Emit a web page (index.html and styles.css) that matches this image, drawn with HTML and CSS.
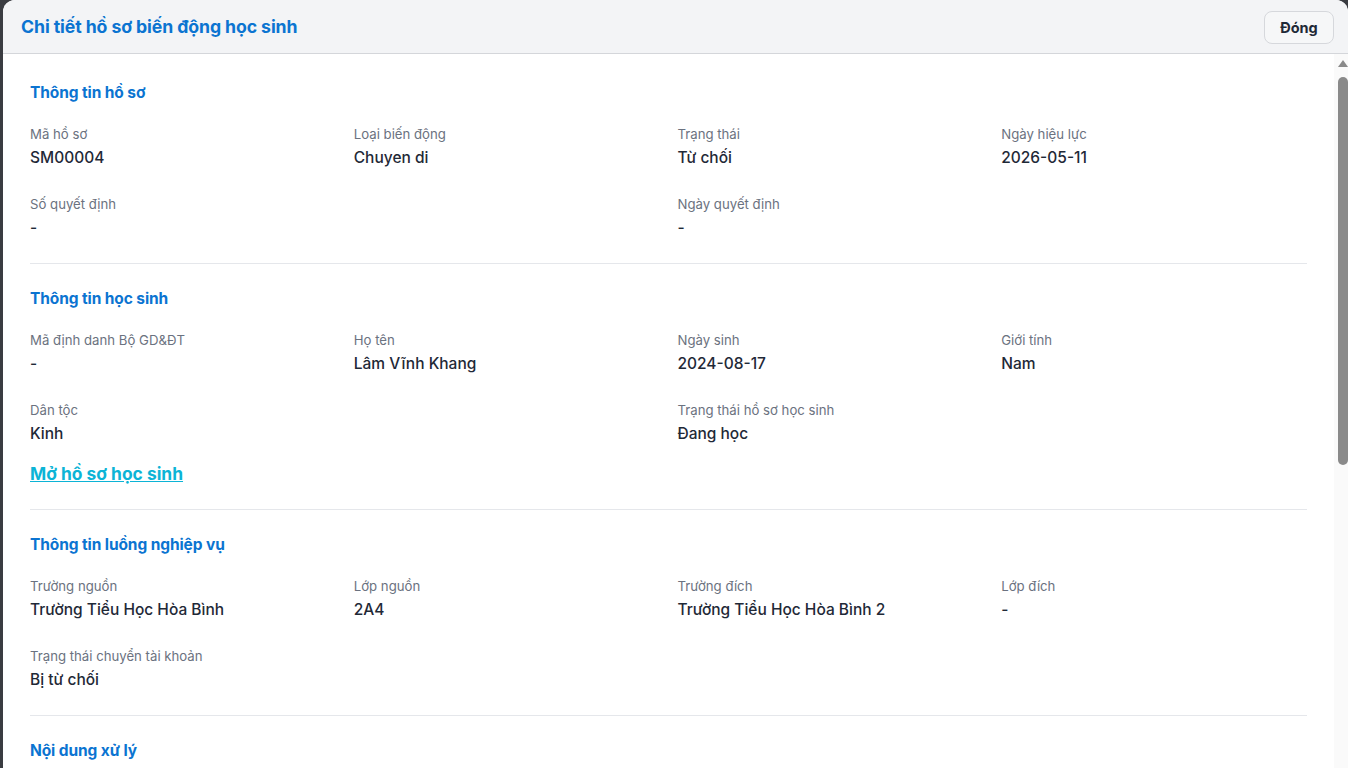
FILE: index.html
```html
<!DOCTYPE html>
<html lang="vi">
  <head>
    <meta charset="UTF-8" />
    <meta name="viewport" content="width=device-width, initial-scale=1.0" />
    <title>Chi tiết hồ sơ biến động học sinh</title>
    <link rel="stylesheet" href="styles.css">
  </head>
  <body>
    <div class="modal">
      <div class="modal-header">
        <h1>Chi tiết hồ sơ biến động học sinh</h1>
        <button class="btn-close">Đóng</button>
      </div>
      <div class="modal-main">
        <div class="modal-body">
          <div class="section">
            <h2>Thông tin hồ sơ</h2>
            <div class="grid">
              <div class="field"><span class="label">Mã hồ sơ</span><span class="value">SM00004</span></div>
              <div class="field"><span class="label">Loại biến động</span><span class="value">Chuyen di</span></div>
              <div class="field"><span class="label">Trạng thái</span><span class="value">Từ chối</span></div>
              <div class="field"><span class="label">Ngày hiệu lực</span><span class="value">2026-05-11</span></div>
              <div class="field"><span class="label">Số quyết định</span><span class="value">-</span></div>
              <div class="field"></div>
              <div class="field"><span class="label">Ngày quyết định</span><span class="value">-</span></div>
            </div>
          </div>

          <div class="section">
            <h2>Thông tin học sinh</h2>
            <div class="grid">
              <div class="field"><span class="label">Mã định danh Bộ GD&amp;ĐT</span><span class="value">-</span></div>
              <div class="field"><span class="label">Họ tên</span><span class="value">Lâm Vĩnh Khang</span></div>
              <div class="field"><span class="label">Ngày sinh</span><span class="value">2024-08-17</span></div>
              <div class="field"><span class="label">Giới tính</span><span class="value">Nam</span></div>
              <div class="field"><span class="label">Dân tộc</span><span class="value">Kinh</span></div>
              <div class="field"></div>
              <div class="field"><span class="label">Trạng thái hồ sơ học sinh</span><span class="value">Đang học</span></div>
            </div>
            <a class="student-link" href="#">Mở hồ sơ học sinh</a>
          </div>

          <div class="section">
            <h2>Thông tin luồng nghiệp vụ</h2>
            <div class="grid">
              <div class="field"><span class="label">Trường nguồn</span><span class="value">Trường Tiểu Học Hòa Bình</span></div>
              <div class="field"><span class="label">Lớp nguồn</span><span class="value">2A4</span></div>
              <div class="field"><span class="label">Trường đích</span><span class="value">Trường Tiểu Học Hòa Bình 2</span></div>
              <div class="field"><span class="label">Lớp đích</span><span class="value">-</span></div>
              <div class="field"><span class="label">Trạng thái chuyển tài khoản</span><span class="value">Bị từ chối</span></div>
            </div>
          </div>

          <div class="section">
            <h2>Nội dung xử lý</h2>
          </div>
        </div>
        <div class="scrollbar">
          <span class="scroll-up"></span>
          <span class="scroll-thumb"></span>
        </div>
      </div>
    </div>
  </body>
</html>
```

FILE: styles.css
```css
* {
  box-sizing: border-box;
  margin: 0;
  padding: 0;
}

html,
body {
  height: 100%;
}

body {
  font-family: "Inter", "Noto Sans", sans-serif;
  background: #3a3c41;
  overflow: hidden;
  padding-left: 3px;
}

.modal {
  height: 100vh;
  background: #fff;
  border-radius: 12px 12px 0 0;
  display: flex;
  flex-direction: column;
  overflow: hidden;
}

.modal-header {
  height: 54px;
  flex-shrink: 0;
  background: #f3f4f6;
  border-bottom: 1px solid #d4d6da;
  display: flex;
  align-items: center;
  justify-content: space-between;
  padding: 0 14px 0 18px;
}

.modal-header h1 {
  font-size: 17.7px;
  font-weight: 700;
  color: #0b74d1;
  letter-spacing: -0.1px;
}

.btn-close {
  width: 70px;
  height: 33px;
  border: 1px solid #d6d8dc;
  border-radius: 8px;
  background: #f6f7f8;
  font-family: inherit;
  font-size: 14.5px;
  font-weight: 700;
  color: #1f2937;
  cursor: pointer;
  margin-top: 1px;
}

.modal-main {
  flex: 1;
  min-height: 0;
  display: flex;
}

.modal-body {
  flex: 1;
  overflow: hidden;
  padding: 4px 27px 40px;
}

.section {
  padding: 25px 0 25px;
  border-bottom: 1px solid #e5e7eb;
}

.section:last-child {
  border-bottom: none;
}

.section h2 {
  font-size: 15.5px;
  line-height: 20px;
  font-weight: 700;
  color: #0b74d1;
  margin-bottom: 22px;
  letter-spacing: -0.1px;
}

.grid {
  display: grid;
  grid-template-columns: repeat(4, 1fr);
  column-gap: 18px;
  row-gap: 27px;
}

.field {
  display: flex;
  flex-direction: column;
  gap: 5px;
}

.label {
  font-size: 13.2px;
  line-height: 18px;
  color: #6b7280;
}

.value {
  font-size: 15.5px;
  line-height: 20px;
  font-weight: 500;
  color: #1f2937;
}

.student-link {
  display: inline-block;
  margin-top: 18px;
  margin-bottom: -3px;
  font-size: 17.4px;
  line-height: 24px;
  font-weight: 700;
  color: #0cb4d6;
  text-decoration: underline;
}

.scrollbar {
  width: 14px;
  flex-shrink: 0;
  background: #fafafa;
  display: flex;
  flex-direction: column;
  align-items: flex-end;
  padding-top: 6px;
}

.scroll-up {
  width: 0;
  height: 0;
  border-left: 5px solid transparent;
  border-right: 5px solid transparent;
  border-bottom: 7px solid #8a8a8a;
}

.scroll-thumb {
  width: 10px;
  height: 388px;
  margin-top: 10px;
  background: #8a8a8a;
  border-radius: 5px;
}
```
